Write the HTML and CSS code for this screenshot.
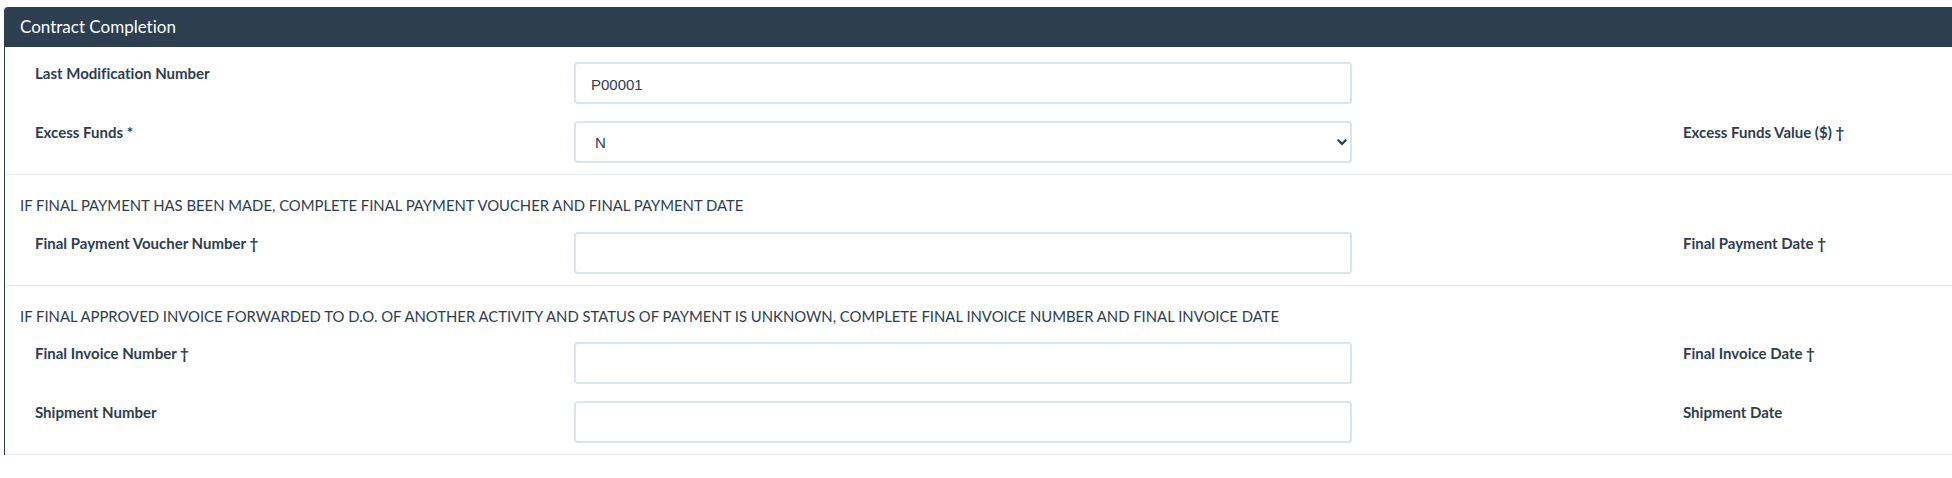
FILE: index.html
```html
<!DOCTYPE html>
<html lang="en">
<head>
<meta charset="utf-8">
<title>Contract Completion</title>
<link rel="stylesheet" href="styles.css">
</head>
<body>
<div class="card">
  <div class="card-header">Contract Completion</div>
  <div class="card-body">
    <section class="group group-first">
      <div class="row">
        <label class="lbl" for="lastMod">Last Modification Number</label>
        <div class="ctl"><input id="lastMod" class="form-control form-input" type="text" value="P00001"></div>
      </div>
      <div class="row">
        <label class="lbl" for="excess">Excess Funds *</label>
        <div class="ctl">
          <div class="select-wrap">
            <select id="excess" class="form-control form-select"><option>N</option><option>Y</option></select>
            <svg class="chev" width="10" height="7" viewBox="0 0 10 7" aria-hidden="true"><path d="M1.3 1.3 L5 5 L8.7 1.3" fill="none" stroke="#2c3e50" stroke-width="2.2" stroke-linecap="round" stroke-linejoin="round"/></svg>
          </div>
        </div>
        <div class="gap"></div>
        <label class="lbl">Excess Funds Value ($) †</label>
      </div>
    </section>

    <section class="group">
      <p class="note">IF FINAL PAYMENT HAS BEEN MADE, COMPLETE FINAL PAYMENT VOUCHER AND FINAL PAYMENT DATE</p>
      <div class="row">
        <label class="lbl" for="fpv">Final Payment Voucher Number †</label>
        <div class="ctl"><input id="fpv" class="form-control form-input" type="text"></div>
        <div class="gap"></div>
        <label class="lbl">Final Payment Date †</label>
      </div>
    </section>

    <section class="group">
      <p class="note">IF FINAL APPROVED INVOICE FORWARDED TO D.O. OF ANOTHER ACTIVITY AND STATUS OF PAYMENT IS UNKNOWN, COMPLETE FINAL INVOICE NUMBER AND FINAL INVOICE DATE</p>
      <div class="row">
        <label class="lbl" for="fin">Final Invoice Number †</label>
        <div class="ctl"><input id="fin" class="form-control form-input" type="text"></div>
        <div class="gap"></div>
        <label class="lbl">Final Invoice Date †</label>
      </div>
      <div class="row">
        <label class="lbl" for="ship">Shipment Number</label>
        <div class="ctl"><input id="ship" class="form-control form-input" type="text"></div>
        <div class="gap"></div>
        <label class="lbl">Shipment Date</label>
      </div>
    </section>
  </div>
</div>
</body>
</html>
```

FILE: styles.css
```css
html, body {
  overflow: hidden;
}

body {
  margin: 0;
  padding: 7px 0 0 4px;
  background: #ffffff;
  font-family: Lato, "Noto Sans", sans-serif;
  font-size: 15px;
  line-height: 1.5;
  color: #2c3e50;
  font-variant-ligatures: none;
}

.card {
  width: 2400px;
  border-left: 1px solid #2c3e50;
  border-top-left-radius: 4px;
  background: #ffffff;
}

.card-header {
  height: 40px;
  line-height: 40px;
  padding: 0 15px;
  background: #2c3e50;
  color: #ffffff;
  font-size: 17px;
  border-top-left-radius: 3px;
}

.card-body {
  padding: 0 15px;
}

.group {
  display: flex;
  flex-direction: column;
  gap: 17px;
  padding: 19px 15px 11px;
  margin: 0 -15px;
  border-bottom: 1px solid #e9ecef;
}

.group-first {
  padding-top: 15px;
}

.note {
  margin: 0 0 -2px;
  font-size: 14.85px;
  line-height: 22.5px;
}

.row {
  display: grid;
  grid-template-columns: 539px 808px 301px 300px;
  align-items: start;
}

.lbl {
  padding-left: 15px;
  font-weight: 700;
  font-size: 15px;
  line-height: 22.5px;
}

.ctl {
  padding: 0 15px;
}

.form-control {
  display: block;
  box-sizing: border-box;
  width: 100%;
  height: 42px;
  margin: 0;
  padding: 0 15px;
  border: 2px solid #dce4ec;
  border-radius: 4px;
  background: #ffffff;
  font-family: "Liberation Sans", Arial, sans-serif;
  font-size: 15px;
  color: #2c3e50;
  outline: none;
}

.form-input {
  padding-top: 3px;
}

.select-wrap {
  position: relative;
}

.form-select {
  appearance: none;
  -webkit-appearance: none;
  padding-left: 19px;
}

.chev {
  position: absolute;
  right: 5px;
  top: 18px;
  pointer-events: none;
}
```
